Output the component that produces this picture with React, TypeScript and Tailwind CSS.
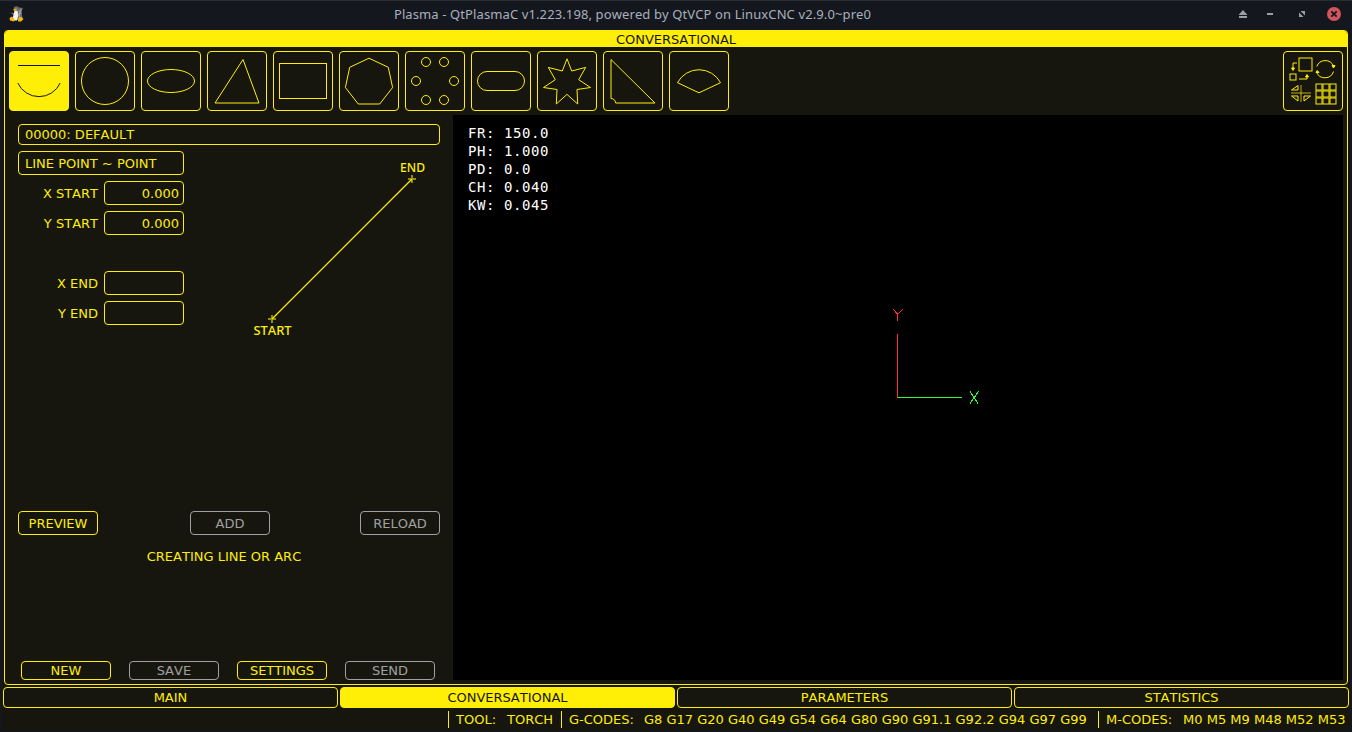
import type { ReactNode } from "react";

const SANS = "font-['DejaVu_Sans',sans-serif]";

function Icon({ children }: { children: ReactNode }) {
  return (
    <svg viewBox="1 1 58 58" width="58" height="58" fill="none" stroke="currentColor" strokeWidth="1">
      {children}
    </svg>
  );
}

const shapes: { name: string; art: ReactNode }[] = [
  { name: "line", art: (<><path d="M9 14.5H51" /><path d="M8.8 32A23.3 23.3 0 0 0 51.2 32" /></>) },
  { name: "circle", art: <circle cx="30" cy="30" r="23.5" /> },
  { name: "ellipse", art: <ellipse cx="30" cy="30" rx="23.5" ry="11.5" /> },
  { name: "triangle", art: <path d="M36 8.5L52 52H8Z" /> },
  { name: "rectangle", art: <rect x="6.500" y="12.500" width="47" height="35" /> },
  { name: "polygon", art: <path d="M30 7.200L49.300 16.300L53.600 36.500L40.700 53H19.300L6.400 36.500L10.700 16.300Z" /> },
  {
    name: "bolt-circle",
    art: (
      <>
        <circle cx="21" cy="11" r="4.500" />
        <circle cx="39" cy="11" r="4.500" />
        <circle cx="11" cy="30" r="4.500" />
        <circle cx="49" cy="30" r="4.500" />
        <circle cx="21" cy="49" r="4.500" />
        <circle cx="39" cy="49" r="4.500" />
      </>
    ),
  },
  { name: "slot", art: <rect x="6.500" y="20.500" width="47" height="19" rx="9.500" /> },
  {
    name: "star",
    art: <path d="M30 7.800L34.700 20L48.700 16.400L41.700 28.700L53.500 36.500L40 38.500L40.700 53L30 43.400L19.300 53L20 38.500L6.500 36.500L18.300 28.700L11.300 16.400L25.300 20Z" />,
  },
  { name: "gusset", art: <path d="M8 8.500L52 52H12.700A4.700 4.700 0 0 0 8 47.500Z" /> },
  { name: "sector", art: <path d="M8.500 31.700A24.300 24.300 0 0 1 51.500 31.700L30 41.800Z" /> },
];

function BlockIcon() {
  return (
    <Icon>
      <rect x="16" y="7" width="13" height="13" />
      <rect x="7" y="23" width="6" height="6" />
      <path d="M14 12H10V17M16 28H24V25" />
      <path d="M18 34V51M8 42H28" opacity="0.700" />
      {[33, 40, 47].map((y) => [33, 40, 47].map((x) => <rect key={`${x}-${y}`} x={x} y={y} width="6" height="6" />))}
      <path d="M8.500 17H11.500L10 19.500ZM22.500 26H25.500L24 23.500Z" fill="currentColor" />
      <path d="M33.800 15.500A9 9 0 0 1 50.500 15M33.500 21A9 9 0 0 0 50.500 20.500" />
      <path d="M49 14.500H52L50.500 17ZM33 21.500H36L34.200 19.500Z" fill="currentColor" />
      <path d="M15 34.500V39H8.500ZM8.500 45H15V50ZM21 45H27.500L21 50Z" />
    </Icon>
  );
}

function TuxIcon() {
  return (
    <svg viewBox="0 0 16 17" width="16" height="17">
      <path d="M5 1Q8 -0.500 10 1.500L14 2L12.500 5L13.500 12L11 14H4L4.500 9L1 6.500L5 7Z" fill="#66696c" />
      <path d="M5.500 5L8.500 5L9.500 9L8 14.500H4.500L4 11Z" fill="#f4f4f4" />
      <path d="M10 4L11 12M12 3L11.500 8" stroke="#a7a9ab" />
      <path d="M4 3L7.500 2.500L8 4.500L5.500 5.500Z" fill="#e9a70d" />
      <path d="M0.500 12L3 10.500L6 14L5 15.500L1 14.500ZM9.500 11.500L12.500 11L14.500 13L12 15.500H9Z" fill="#f7b90a" />
    </svg>
  );
}

function Button({ label, width, height, disabled = false }: { label: string; width: string; height: string; disabled?: boolean }) {
  return (
    <button
      disabled={disabled}
      className={`${width} ${height} flex items-center justify-center rounded-[4px] border ${disabled ? "border-[#a0a0a0] text-[#a0a0a0]" : "border-[#ffee06] text-[#ffee06]"}`}
    >
      {label}
    </button>
  );
}

function Field({ label, value = "" }: { label: string; value?: string }) {
  return (
    <label className="flex h-6 w-[166px] items-center justify-end gap-1.5">
      <span>{label}</span>
      <span className="flex h-6 w-20 items-center justify-end rounded-[4px] border border-[#ffee06] pr-1">{value}</span>
    </label>
  );
}

function LineDiagram() {
  return (
    <svg width="180" height="190" viewBox="240 155 180 190" fill="none" stroke="#ffee06">
      <path d="M272 319L412 179" strokeWidth="1.200" />
      <path d="M268 319H276M272 315V323M408 179H416M412 175V183" strokeWidth="2" opacity="0.550" />
      <g fill="#ffee06" stroke="none" className="font-['Noto_Sans',sans-serif] text-[12.5px] font-medium">
        <text x="400" y="172" textLength="25" lengthAdjust="spacingAndGlyphs">END</text>
        <text x="253.500" y="335" textLength="38" lengthAdjust="spacingAndGlyphs">START</text>
      </g>
    </svg>
  );
}

const readout = ["FR: 150.0", "PH: 1.000", "PD: 0.0", "CH: 0.040", "KW: 0.045"];
const tabs = ["MAIN", "CONVERSATIONAL", "PARAMETERS", "STATISTICS"];

export default function App() {
  return (
    <div className={`flex h-[732px] w-[1352px] flex-col overflow-hidden bg-[#15171e] text-[13px] leading-none whitespace-nowrap text-[#ffee06] [font-kerning:none] ${SANS}`}>
      <header className="flex h-[30px] shrink-0 items-center border-t border-[#2b2d33] pr-[10px] pb-[3px] pl-[9px] font-['Noto_Sans',sans-serif] text-[#a9b0bd]">
        <div className="w-[20px]"><TuxIcon /></div>
        <div className="flex-1 text-center text-[13px] tracking-[0.11px]">Plasma - QtPlasmaC v1.223.198, powered by QtVCP on LinuxCNC v2.9.0~pre0</div>
        <svg width="106" height="16" viewBox="1236 6 106 16" className="shrink-0">
          <path d="M1243 10L1247.500 15H1238.500ZM1239 16H1247V18H1239ZM1267 13H1273V15H1267ZM1300.500 11H1305V15.500ZM1299 12.500V17H1303.500Z" fill="#9b9ea4" />
          <circle cx="1334" cy="14" r="7" fill="#d2555c" />
          <path d="M1331.300 11.300L1336.700 16.700M1336.700 11.300L1331.300 16.700" stroke="#15171e" strokeWidth="1.800" />
        </svg>
      </header>

      <div className="mx-0.5 flex h-[701px] flex-col bg-[#16160e] px-px">
        <main className="mr-px ml-px flex h-[655px] shrink-0 flex-col overflow-hidden rounded-[4px] border border-[#ffee06]">
          <h1 className="flex h-4 shrink-0 items-center justify-center bg-[#ffee06] text-[#16160e]">CONVERSATIONAL</h1>
          <nav className="flex h-[68px] shrink-0 items-start gap-1.5 pt-1 pr-1 pl-1">
            {shapes.map((s, i) => (
              <button
                key={s.name}
                aria-label={s.name}
                className={`size-[60px] shrink-0 rounded-[4px] border border-[#ffee06] ${i === 0 ? "bg-[#ffee06] text-[#16160e]" : ""}`}
              >
                <Icon>{s.art}</Icon>
              </button>
            ))}
            <button aria-label="block" className="ml-auto size-[60px] shrink-0 rounded-[4px] border border-[#ffee06]">
              <BlockIcon />
            </button>
          </nav>

          <div className="flex h-[565px] shrink-0">
            <section className="flex w-[448px] shrink-0 flex-col pt-[9px] pl-[13px]">
              <div className="flex h-[21px] w-[422px] shrink-0 items-center rounded-[4px] border border-[#ffee06] pl-1.5">00000: DEFAULT</div>
              <div className="mt-1.5 flex h-[360px] shrink-0">
                <div className="flex w-[166px] flex-col gap-1.5">
                  <div className="flex h-6 items-center rounded-[4px] border border-[#ffee06] pl-1.5">LINE POINT ~ POINT</div>
                  <Field label="X START" value="0.000" />
                  <Field label="Y START" value="0.000" />
                  <div className="h-6" />
                  <Field label="X END" />
                  <Field label="Y END" />
                </div>
                <div className="pt-1 pl-14 [&>svg]:overflow-visible"><LineDiagram /></div>
              </div>
              <div className="flex w-[422px] shrink-0">
                <Button label="PREVIEW" width="w-20" height="h-6" />
                <div className="mr-[90px] ml-[92px]"><Button label="ADD" width="w-20" height="h-6" disabled /></div>
                <Button label="RELOAD" width="w-20" height="h-6" disabled />
              </div>
              <p className="mt-[15px] h-[111px] w-[412px] shrink-0 text-center">CREATING LINE OR ARC</p>
              <div className="flex shrink-0 gap-[18px] pl-[3px]">
                <Button label="NEW" width="w-[90px]" height="h-[19px]" />
                <Button label="SAVE" width="w-[90px]" height="h-[19px]" disabled />
                <Button label="SETTINGS" width="w-[90px]" height="h-[19px]" />
                <Button label="SEND" width="w-[90px]" height="h-[19px]" disabled />
              </div>
            </section>

            <section className="relative w-[890px] shrink-0 bg-black pt-[9px] pl-[15px] font-['DejaVu_Sans_Mono',monospace] text-[14px] leading-[18px] tracking-[0.572px] text-white">
              {readout.map((r) => (
                <div key={r}>{r}</div>
              ))}
              <svg className="absolute top-[185px] left-[430px]" width="110" height="110" viewBox="883 300 110 110" fill="none" shapeRendering="crispEdges">
                <path d="M897.500 334V398M897.500 321V314M893.200 309.200L897.700 314.200L902.700 309.200" stroke="#ff3333" />
                <path d="M898 397.500H962M970 391.500L978 403.500M978.500 391.500L970 403.500" stroke="#33ff33" />
              </svg>
            </section>
          </div>
        </main>

        <nav className="mt-0.5 flex h-[21px] shrink-0 gap-0.5">
          {tabs.map((t, i) => (
            <button
              key={t}
              className={`flex h-[21px] w-[335px] shrink-0 items-center justify-center rounded-[4px] border border-[#ffee06] ${i === 1 ? "bg-[#ffee06] text-[#16160e]" : ""}`}
            >
              {t}
            </button>
          ))}
        </nav>

        <footer className="mt-[3px] flex h-[17px] shrink-0 pl-[445px]">
          <div className="flex w-[113px] shrink-0 items-center gap-[11px] border-l border-[#ffee06] pl-[7px]"><span>TOOL:</span><span>TORCH</span></div>
          <div className="flex w-[537px] shrink-0 items-center gap-[10px] border-l border-[#ffee06] pl-[7px]"><span>G-CODES:</span><span>G8 G17 G20 G40 G49 G54 G64 G80 G90 G91.1 G92.2 G94 G97 G99</span></div>
          <div className="flex shrink-0 items-center gap-[11px] border-l border-[#ffee06] pl-[7px]"><span>M-CODES:</span><span>M0 M5 M9 M48 M52 M53</span></div>
        </footer>
      </div>
    </div>
  );
}
